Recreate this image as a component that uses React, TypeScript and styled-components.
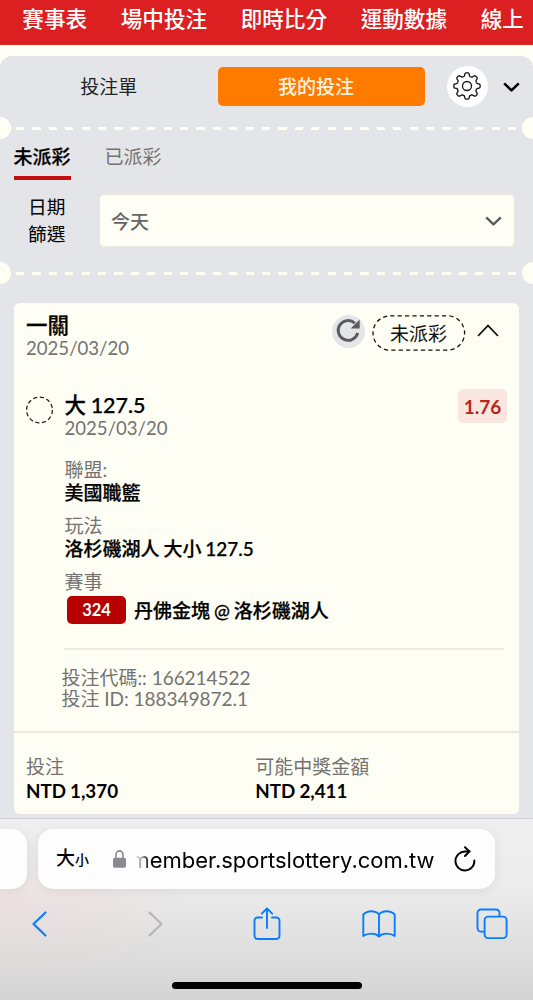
import React from "react";
import styled, { createGlobalStyle, css } from "styled-components";

const cream = "#fffef4";
const panel = "#e4e5e8";
const grey = "#737373";
const blue = "#0a7cff";

const Global = createGlobalStyle`
  * { box-sizing: border-box; }
  body {
    margin: 0;
    background: ${cream};
    font-family: Lato, "Noto Sans CJK TC", sans-serif;
    color: #000;
    overflow: hidden;
  }
  svg { display: block; }
`;

const semibold = css`
  font-weight: 500;
  -webkit-text-stroke: 0.25px currentColor;
`;

const Page = styled.div`
  width: 533px;
  height: 1000px;
  overflow: hidden;
  display: flex;
  flex-direction: column;
`;

const Nav = styled.nav`
  flex: none;
  height: 45px;
  background: #dc1f20;
  display: flex;
  gap: 33.6px;
  padding-left: 22.3px;
  border-bottom: 1px solid #cf2a28;
`;

const NavItem = styled.span`
  flex: none;
  color: #fff;
  font-size: 21.6px;
  font-weight: 500;
  line-height: 38px;
`;

const Slip = styled.main`
  flex: none;
  height: 762px;
  margin-top: 11px;
  background: ${panel};
  border-radius: 12px 12px 0 0;
`;

const SlipTabs = styled.div`
  height: 61px;
  display: flex;
  align-items: center;
`;

const SlipTab = styled.button<{ $active?: boolean }>`
  flex: none;
  border: 0;
  padding: 0;
  font: inherit;
  font-size: 19px;
  width: ${(p) => (p.$active ? 207 : 217.5)}px;
  height: 38.5px;
  line-height: 39px;
  border-radius: 5px;
  color: ${(p) => (p.$active ? "#fff4e0" : "#222")};
  background: ${(p) => (p.$active ? "#ff7b00" : "transparent")};
  font-weight: ${(p) => (p.$active ? 500 : 400)};
  padding-right: ${(p) => (p.$active ? 10 : 0)}px;
`;

const GearButton = styled.button`
  border: 0;
  padding: 0 0 2px;
  margin: 0 15px 0 22px;
  width: 41px;
  height: 41px;
  border-radius: 50%;
  background: #fff;
  display: grid;
  place-items: center;
`;

const Perforation = styled.div`
  height: 22px;
  display: flex;
  align-items: center;
  justify-content: space-between;
  overflow: hidden;
  &::before,
  &::after {
    content: "";
    flex: none;
    width: 22px;
    height: 22px;
    border-radius: 50%;
    background: ${cream};
  }
  &::before { margin-left: -11px; }
  &::after { margin-right: -11px; }
`;

const Dashes = styled.div`
  width: 501px;
  height: 3px;
  margin-top: 1px;
  background: repeating-linear-gradient(90deg, ${cream} 0 8.3px, transparent 8.3px 16.4px);
`;

const StatusTabs = styled.div`
  display: flex;
  gap: 34px;
  padding-left: 13.5px;
  height: 41px;
`;

const StatusTab = styled.span<{ $active?: boolean }>`
  font-size: 19px;
  line-height: 36px;
  height: 40.5px;
  color: ${(p) => (p.$active ? "#000" : grey)};
  ${(p) =>
    p.$active &&
    css`
      ${semibold}
      border-bottom: 4px solid #c20d12;
    `}
`;

const Filter = styled.div`
  display: flex;
  padding: 14px 0 0 26px;
  height: 82px;
`;

const FilterLabel = styled.div`
  width: 73.4px;
  padding-right: 34px;
  font-size: 18.7px;
  line-height: 27px;
  text-align: right;
`;

const Select = styled.div`
  width: 416px;
  height: 53px;
  background: ${cream};
  border: 1px solid #ebe9df;
  border-radius: 5px;
  display: flex;
  align-items: center;
  justify-content: space-between;
  padding: 0 12px 0 10.5px;
  font-size: 19px;
  font-weight: 500;
  color: #666;
`;

const Card = styled.section`
  margin: 19px 14px 0;
  height: 511px;
  background: ${cream};
  border-radius: 6px;
  display: flex;
  flex-direction: column;
`;

const CardHead = styled.header`
  height: 83px;
  padding: 10px 0 0 12px;
  display: flex;
  align-items: flex-start;
`;

const Titles = styled.div`
  flex: 1;
`;

const Title = styled.div`
  font-size: 21.5px;
  ${semibold}
  line-height: 24px;
  word-spacing: -0.8px;
`;

const Muted = styled.div<{ $line?: number }>`
  font-size: 19px;
  line-height: ${(p) => p.$line ?? 21}px;
  color: ${grey};
`;

const DateText = styled(Muted)`
  font-size: 18.6px;
  padding-top: 1px;
`;

const Strong = styled.div`
  font-size: 19px;
  ${semibold}
  line-height: 24px;
  word-spacing: -0.9px;
`;

const Amount = styled.div`
  font-size: 18.8px;
  font-weight: 700;
  line-height: 24px;
  word-spacing: -0.5px;
`;

const RefreshButton = styled.button`
  border: 0;
  padding: 0;
  margin: 2px 6.5px 0 0;
  width: 33px;
  height: 33px;
  border-radius: 50%;
  background: ${panel};
`;

const StatusPill = styled.div`
  position: relative;
  width: 94px;
  height: 36px;
  margin: 2px 11px 0 0;
  line-height: 38px;
  text-align: center;
  font-size: 19px;
  color: #111;
  svg { position: absolute; inset: 0; }
`;

const ChevronUp = styled.div`
  margin: 11px 20.5px 0 0;
`;

const Pick = styled.div`
  flex: 1;
  display: flex;
  padding: 4px 12px 0 12px;
`;

const Ring = styled.div`
  width: 38.5px;
  padding-top: 5.5px;
`;

const Details = styled.div`
  flex: 1;
`;

const PickTop = styled.div`
  display: flex;
  justify-content: space-between;
  align-items: flex-start;
  height: 68px;
  padding-top: 3px;
`;

const Odds = styled.div`
  width: 49px;
  height: 34px;
  margin-top: -4px;
  border-radius: 5px;
  background: #f8e6df;
  color: #b9261f;
  font-size: 19px;
  font-weight: 700;
  line-height: 35px;
  text-align: center;
`;

const Field = styled.div`
  height: 56px;
`;

const Match = styled.div`
  display: flex;
  align-items: center;
  gap: 8px;
  margin: 3px 0 0 2.5px;
  ${Strong} { padding-top: 3px; }
`;

const MatchNo = styled.span`
  width: 59px;
  height: 27.5px;
  border-radius: 5px;
  background: #b70000;
  color: #fff;
  font-size: 16.5px;
  font-weight: 700;
  line-height: 28px;
  text-align: center;
`;

const Codes = styled.div`
  margin: 24px 3px 0 -0.5px;
  border-top: 2px solid #ebeae4;
  padding-top: 17px;
  ${Muted} {
    margin-left: -2.5px;
    letter-spacing: -0.03px;
  }
`;

const Totals = styled.footer`
  height: 83px;
  border-top: 2px solid #e8e8e3;
  display: grid;
  grid-template-columns: 229.3px 1fr;
  padding: 21px 0 0 12px;
`;

const Browser = styled.div`
  flex: 1;
  border-top: 1px solid #cfd0d3;
  background:
    radial-gradient(ellipse 170px 80px at 15px 88px, rgba(240, 205, 205, 0.3), transparent),
    linear-gradient(#efeff0 0, #ededee 35%, #e3e3e3 60%, #d4d4d4 100%);
  display: flex;
  flex-direction: column;
`;

const AddressRow = styled.div`
  display: flex;
  gap: 11px;
  padding-top: 10px;
`;

const PreviousTab = styled.div`
  width: 27px;
  height: 60px;
  background: #fdfdfd;
  border-radius: 0 15px 15px 0;
  box-shadow: 0 2px 12px rgba(0, 0, 0, 0.08);
`;

const AddressBar = styled.div`
  width: 456.5px;
  height: 60px;
  background: #fdfdfd;
  border-radius: 15px;
  box-shadow: 0 2px 12px rgba(0, 0, 0, 0.08);
  display: flex;
  align-items: center;
  padding: 0 19px 0 18px;
`;

const TextSize = styled.div`
  width: 57px;
  font-size: 19px;
  font-weight: 500;
  line-height: 62px;
  small { font-size: 14px; }
`;

const Url = styled.div`
  width: 300px;
  margin: 0 19px 0 9px;
  display: flex;
  justify-content: flex-end;
  overflow: hidden;
  white-space: nowrap;
  font-family: Inter, sans-serif;
  font-size: 22px;
  line-height: 34px;
  padding-top: 1px;
  letter-spacing: -0.02px;
  mask-image: linear-gradient(90deg, transparent 0, #000 16px);
`;

const Toolbar = styled.div`
  display: grid;
  grid-template-columns: 116px 105.5px 109.5px 114px auto;
  align-items: center;
  height: 70px;
  padding-left: 31px;
`;

const HomeBar = styled.div`
  width: 190px;
  height: 7px;
  border-radius: 4px;
  background: #000;
  margin: 23px auto 0;
`;

const gearPath = (() => {
  const pts: string[] = [];
  const n = 144;
  for (let i = 0; i <= n; i++) {
    const a = (i / n) * Math.PI * 2;
    const wave = Math.tanh(2.2 * Math.cos(8 * a));
    const r = 11.6 + 1.6 * wave;
    pts.push(`${(15 + r * Math.sin(a)).toFixed(2)} ${(15 - r * Math.cos(a)).toFixed(2)}`);
  }
  return `M${pts.join("L")}Z`;
})();

const Chevron = ({ color, width }: { color: string; width: number }) => (
  <svg width="17" height="12" viewBox="0 0 17 12" fill="none" stroke={color} strokeWidth={width}>
    <path d="M1.2 2.4 8.5 9.4 15.8 2.4" strokeLinejoin="round" />
  </svg>
);

const navItems = ["賽事表", "場中投注", "即時比分", "運動數據", "線上"];

export default function App() {
  return (
    <Page>
      <Global />
      <Nav>
        {navItems.map((n) => (
          <NavItem key={n}>{n}</NavItem>
        ))}
      </Nav>
      <Slip>
        <SlipTabs>
          <SlipTab>投注單</SlipTab>
          <SlipTab $active>我的投注</SlipTab>
          <GearButton>
            <svg width="30" height="30" viewBox="0 0 30 30" fill="none" stroke="#111" strokeWidth="1.3">
              <path d={gearPath} />
              <circle cx="15" cy="15" r="4.5" />
            </svg>
          </GearButton>
          <Chevron color="#000" width={2.6} />
        </SlipTabs>
        <Perforation>
          <Dashes />
        </Perforation>
        <StatusTabs>
          <StatusTab $active>未派彩</StatusTab>
          <StatusTab>已派彩</StatusTab>
        </StatusTabs>
        <Filter>
          <FilterLabel>日期 篩選</FilterLabel>
          <Select>
            今天
            <Chevron color="#5c5c5c" width={2.4} />
          </Select>
        </Filter>
        <Perforation>
          <Dashes />
        </Perforation>
        <Card>
          <CardHead>
            <Titles>
              <Title>一關</Title>
              <DateText>2025/03/20</DateText>
            </Titles>
            <RefreshButton>
              <svg width="33" height="33" viewBox="0 0 33 33" fill="none">
                <path d="M25.7 17.9A9.9 9.9 0 1 1 22.900 8.200" stroke="#5b5b5d" strokeWidth="2.9" />
                <path d="M27.700 4.500v9h-9z" fill="#5b5b5d" />
              </svg>
            </RefreshButton>
            <StatusPill>
              <svg width="94" height="36" viewBox="0 0 94 36" fill="none">
                <rect x="1" y="0.8" width="91.6" height="34.4" rx="17.2" stroke="#111" strokeWidth="1.3" strokeDasharray="4.2 3.2" />
              </svg>
              未派彩
            </StatusPill>
            <ChevronUp>
              <svg width="22" height="13" viewBox="0 0 22 13" fill="none" stroke="#111" strokeWidth="1.7">
                <path d="M1 12 11 1.6 21 12" />
              </svg>
            </ChevronUp>
          </CardHead>
          <Pick>
            <Ring>
              <svg width="27" height="28" viewBox="0 0 27 28" fill="none">
                <circle cx="13.5" cy="14" r="12.9" stroke="#222" strokeWidth="1.3" strokeDasharray="4.1 2.65" />
              </svg>
            </Ring>
            <Details>
              <PickTop>
                <Titles>
                  <Title>大 127.5</Title>
                  <DateText>2025/03/20</DateText>
                </Titles>
                <Odds>1.76</Odds>
              </PickTop>
              <Field>
                <Muted $line={23}>聯盟:</Muted>
                <Strong>美國職籃</Strong>
              </Field>
              <Field>
                <Muted $line={23}>玩法</Muted>
                <Strong>洛杉磯湖人 大小 127.5</Strong>
              </Field>
              <Muted $line={23}>賽事</Muted>
              <Match>
                <MatchNo>324</MatchNo>
                <Strong>丹佛金塊 @ 洛杉磯湖人</Strong>
              </Match>
              <Codes>
                <Muted>投注代碼:: 166214522</Muted>
                <Muted>投注 ID: 188349872.1</Muted>
              </Codes>
            </Details>
          </Pick>
          <Totals>
            <div>
              <Muted $line={25}>投注</Muted>
              <Amount>NTD 1,370</Amount>
            </div>
            <div>
              <Muted $line={25}>可能中獎金額</Muted>
              <Amount>NTD 2,411</Amount>
            </div>
          </Totals>
        </Card>
      </Slip>
      <Browser>
        <AddressRow>
          <PreviousTab />
          <AddressBar>
            <TextSize>
              大<small>小</small>
            </TextSize>
            <svg width="13" height="18" viewBox="0 0 13 18">
              <path d="M3 8.5V4.8a3.5 3.9 0 0 1 7 0v3.7" fill="none" stroke="#8a8a8e" strokeWidth="1.6" />
              <rect x="0" y="7.8" width="13" height="10" rx="1.8" fill="#8a8a8e" />
            </svg>
            <Url>member.sportslottery.com.tw</Url>
            <svg width="22" height="26" viewBox="0 0 22 26" fill="none" stroke="#000" strokeWidth="1.9" strokeLinecap="round" strokeLinejoin="round">
              <path d="M20.4 14.5A9.5 9.5 0 1 1 11 5.5h4.5" />
              <path d="M11 1.2 15.4 5.5 11 10" />
            </svg>
          </AddressBar>
        </AddressRow>
        <Toolbar>
          <svg width="17" height="28" viewBox="0 0 17 28" fill="none" stroke={blue} strokeWidth="2.2" strokeLinecap="round" strokeLinejoin="round">
            <path d="M14.5 2.5 2.5 14l12 11.5" />
          </svg>
          <svg width="17" height="28" viewBox="0 0 17 28" fill="none" stroke="#b5b5b6" strokeWidth="2.2" strokeLinecap="round" strokeLinejoin="round">
            <path d="M2.5 2.5 14.5 14l-12 11.5" />
          </svg>
          <svg width="28" height="34" viewBox="0 0 28 34" fill="none" stroke={blue} strokeWidth="1.9" strokeLinecap="round" strokeLinejoin="round">
            <path d="M9 10.5H4.5a3 3 0 0 0-3 3V29a3 3 0 0 0 3 3h19a3 3 0 0 0 3-3V13.5a3 3 0 0 0-3-3H19" />
            <path d="M14 21V1.5M8.8 6.700 14 1.5l5.2 5.2" />
          </svg>
          <svg width="34" height="28" viewBox="0 0 34 28" fill="none" stroke={blue} strokeWidth="1.9" strokeLinejoin="round">
            <path d="M17 26.5C13.5 22.8 5.5 22.8 1.3 26V4.5C5.5.2 13.5.2 17 4.5c3.5-4.3 11.5-4.3 15.7 0V26C28.5 22.8 20.5 22.8 17 26.5zV4.5" />
          </svg>
          <svg width="32" height="32" viewBox="0 0 32 32" fill="none" stroke={blue} strokeWidth="1.9" strokeLinejoin="round">
            <rect x="8.6" y="8.6" width="22" height="21.5" rx="3.5" />
            <path d="M8.6 23.6H5a3.5 3.5 0 0 1-3.5-3.5V5A3.5 3.5 0 0 1 5 1.5h15a3.5 3.5 0 0 1 3.5 3.5v3.6" />
          </svg>
        </Toolbar>
        <HomeBar />
      </Browser>
    </Page>
  );
}
